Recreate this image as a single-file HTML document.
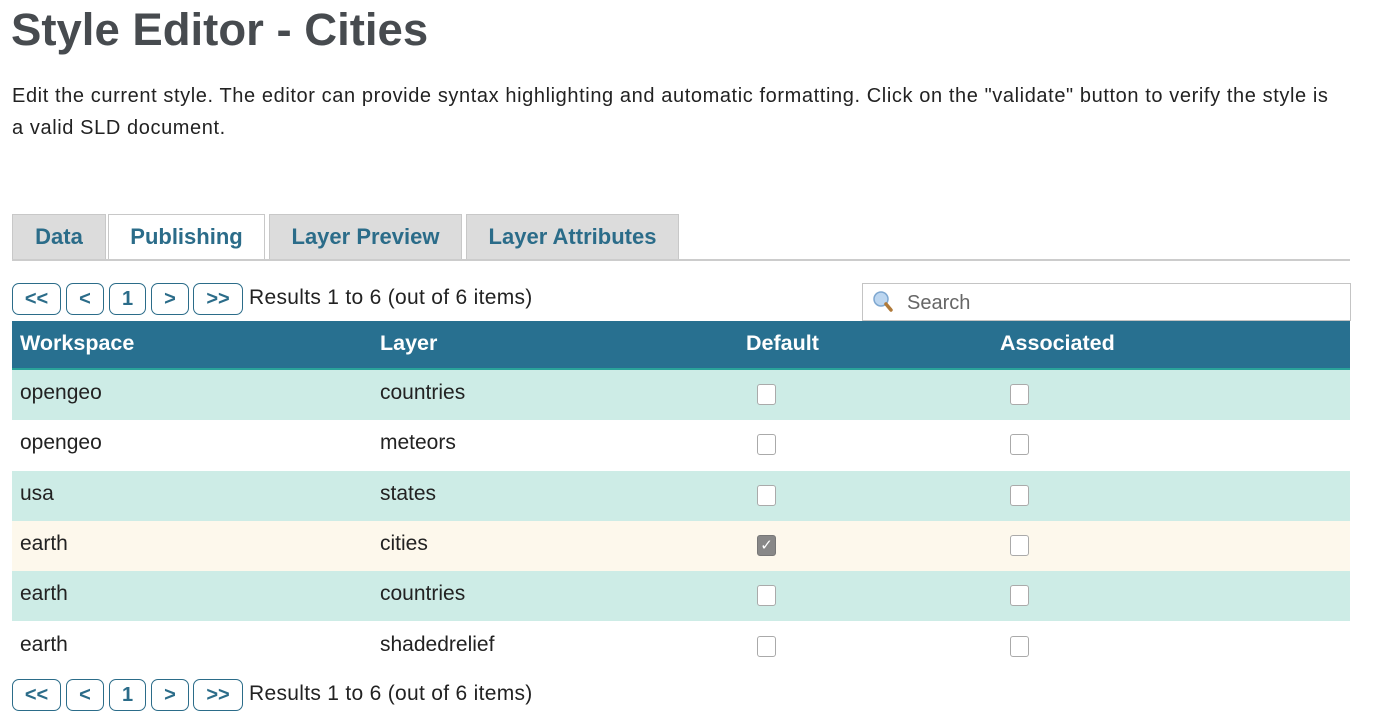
<!DOCTYPE html>
<html><head><style>
body{margin:0;background:#fff;font-family:"Liberation Sans",Arial,sans-serif;color:#222;width:1382px;height:728px;overflow:hidden;position:relative}
.a{position:absolute}
h1{position:absolute;left:11px;top:4px;margin:0;font-size:45.5px;font-weight:bold;color:#474b4f;letter-spacing:0px}
p{position:absolute;left:12px;top:80px;margin:0;font-size:20px;letter-spacing:0.6px;line-height:32px;width:1334px;color:#222}
.tab{position:absolute;top:214px;height:45px;background:#dcdcdc;border:1px solid #c8c8c8;border-bottom:none;color:#2b6c89;font-weight:bold;font-size:22px;text-align:center;line-height:44px;box-sizing:border-box}
.pg{position:absolute;height:32px;border:1px solid #2b6c89;border-radius:7px;box-sizing:border-box;color:#2b6c89;font-size:20px;font-weight:bold;text-align:center;line-height:30px}
.res{position:absolute;font-size:21px;letter-spacing:0.3px;color:#222}
.hdr{position:absolute;left:12px;top:321px;width:1338px;height:47px;background:#287090;border-bottom:2px solid #2aa39a}
.hdr span{position:absolute;top:10px;color:#fff;font-weight:bold;font-size:21.5px}
.row{position:absolute;left:12px;width:1338px;height:50px;font-size:21px}
.row span{position:absolute;top:11px}
.cb{position:absolute;top:14px;width:17px;height:19px;border:1px solid #aaa;border-radius:3px;background:#fff}
</style></head><body>
<h1>Style Editor - Cities</h1>
<p>Edit the current style. The editor can provide syntax highlighting and automatic formatting. Click on the "validate" button to verify the style is<br>a valid SLD document.</p>
<div class="tab" style="left:12px;width:94px">Data</div>
<div class="tab" style="left:108px;width:157px;background:#fff;height:47px">Publishing</div>
<div class="tab" style="left:269px;width:193px">Layer Preview</div>
<div class="tab" style="left:466px;width:213px">Layer Attributes</div>
<div class="a" style="left:12px;top:259px;width:1338px;height:2px;background:#ccc"></div>

<div class="pg" style="left:12px;top:283px;width:49px">&lt;&lt;</div>
<div class="pg" style="left:66px;top:283px;width:38px">&lt;</div>
<div class="pg" style="left:109px;top:283px;width:37px">1</div>
<div class="pg" style="left:151px;top:283px;width:38px">&gt;</div>
<div class="pg" style="left:193px;top:283px;width:50px">&gt;&gt;</div>
<div class="res" style="left:249px;top:286px">Results 1 to 6 (out of 6 items)</div>

<div class="a" style="left:862px;top:283px;width:489px;height:38px;border:1px solid #c4c4c4;box-sizing:border-box">
<svg class="a" style="left:9px;top:6px" width="22" height="24" viewBox="0 0 22 24"><circle cx="9" cy="9" r="7" fill="#bcd6f0" stroke="#7ea7d0" stroke-width="1.5"/><line x1="14" y1="14" x2="19" y2="20" stroke="#b07a3a" stroke-width="3.5" stroke-linecap="round"/></svg>
<span class="a" style="left:44px;top:8px;font-size:20px;color:#666">Search</span></div>

<div class="hdr"><span style="left:8px">Workspace</span><span style="left:368px">Layer</span><span style="left:734px">Default</span><span style="left:988px">Associated</span></div>

<div class="row" style="top:370px;background:#cdece6"><span style="left:8px">opengeo</span><span style="left:368px">countries</span><div class="cb" style="left:745px"></div><div class="cb" style="left:998px"></div></div>
<div class="row" style="top:420px;background:#fff"><span style="left:8px">opengeo</span><span style="left:368px">meteors</span><div class="cb" style="left:745px"></div><div class="cb" style="left:998px"></div></div>
<div class="row" style="top:471px;background:#cdece6"><span style="left:8px">usa</span><span style="left:368px">states</span><div class="cb" style="left:745px"></div><div class="cb" style="left:998px"></div></div>
<div class="row" style="top:521px;background:#fdf8ec"><span style="left:8px">earth</span><span style="left:368px">cities</span><div class="cb" style="left:745px;background:#888;border-color:#777;color:#fff;font-size:15px;line-height:19px;text-align:center">✓</div><div class="cb" style="left:998px"></div></div>
<div class="row" style="top:571px;background:#cdece6"><span style="left:8px">earth</span><span style="left:368px">countries</span><div class="cb" style="left:745px"></div><div class="cb" style="left:998px"></div></div>
<div class="row" style="top:622px;background:#fff"><span style="left:8px">earth</span><span style="left:368px">shadedrelief</span><div class="cb" style="left:745px"></div><div class="cb" style="left:998px"></div></div>

<div class="pg" style="left:12px;top:679px;width:49px">&lt;&lt;</div>
<div class="pg" style="left:66px;top:679px;width:38px">&lt;</div>
<div class="pg" style="left:109px;top:679px;width:37px">1</div>
<div class="pg" style="left:151px;top:679px;width:38px">&gt;</div>
<div class="pg" style="left:193px;top:679px;width:50px">&gt;&gt;</div>
<div class="res" style="left:249px;top:682px">Results 1 to 6 (out of 6 items)</div>
</body></html>
